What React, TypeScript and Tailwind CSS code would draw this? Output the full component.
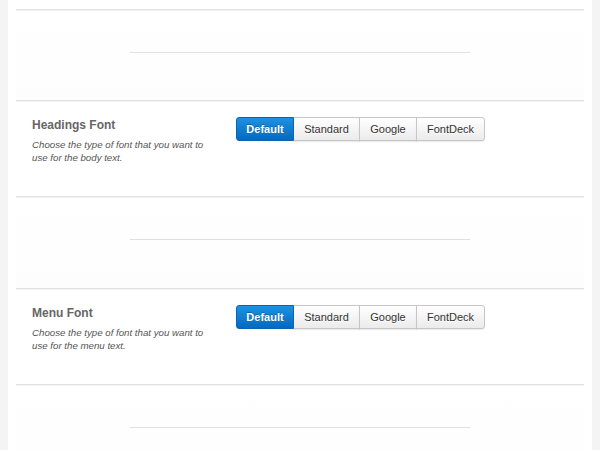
import React, { useState } from 'react';

const options = ['Default', 'Standard', 'Google', 'FontDeck'];
const widths: Record<string, string> = {
  Default: 'w-[58px]',
  Standard: 'w-[67px]',
  Google: 'w-[58px]',
  FontDeck: 'w-[69px]',
};

const Divider: React.FC = () => (
  <div className="h-[2px] border-t border-[#e2e2e2] bg-[#f2f2f2]" />
);

const Spacer: React.FC<{ first?: boolean }> = ({ first }) => (
  <div
    className={`${first ? 'h-[89px]' : 'h-[90px]'} flex flex-col bg-gradient-to-b from-white to-[#fdfdfd]`}
  >
    <div className="h-[41px]" />
    <div className="mx-auto w-[340px] h-[2px] border-t border-[#e0e0e0] bg-white" />
  </div>
);

const FontPicker: React.FC = () => {
  const [selected, setSelected] = useState('Default');
  return (
    <div className="flex">
      {options.map((opt, i) => {
        const active = selected === opt;
        return (
          <button
            key={opt}
            onClick={() => setSelected(opt)}
            className={`${widths[opt]} h-[24px] text-[11px] leading-none border ${
              i === 0 ? 'rounded-l-[3px]' : '-ml-px'
            } ${i === options.length - 1 ? 'rounded-r-[3px]' : ''} ${
              active
                ? 'relative z-10 font-bold text-white border-[#0a63b4] bg-gradient-to-b from-[#1d92e0] to-[#0569c0] [text-shadow:0_-1px_0_rgba(0,0,0,0.25)]'
                : 'text-[#333] border-[#c6c6c6] bg-gradient-to-b from-white to-[#ebebeb] shadow-[0_1px_1px_rgba(0,0,0,0.08)] [text-shadow:0_1px_0_#fff]'
            }`}
          >
            {opt}
          </button>
        );
      })}
    </div>
  );
};

const Section: React.FC<{ title: string; desc: string }> = ({ title, desc }) => (
  <div className="h-[94px] flex">
    <div className="w-[220px] pl-4 pt-[16px]">
      <h3 className="text-[12px] leading-[14px] font-bold text-[#666]">{title}</h3>
      <p className="mt-[6px] max-w-[176px] text-[9.7px] leading-[13px] italic text-[#555]">{desc}</p>
    </div>
    <div className="pt-[15px]">
      <FontPicker />
    </div>
  </div>
);

const App: React.FC = () => {
  return (
    <div
      className="h-[450px] overflow-hidden bg-[#f4f4f4] px-2"
      style={{ fontFamily: '"Liberation Sans", Arial, sans-serif' }}
    >
      <div className="h-full bg-white px-2 pt-[9px]">
        <Divider />
        <Spacer first />
        <Divider />
        <Section title="Headings Font" desc="Choose the type of font that you want to use for the body text." />
        <Divider />
        <Spacer />
        <Divider />
        <Section title="Menu Font" desc="Choose the type of font that you want to use for the menu text." />
        <Divider />
        <Spacer />
      </div>
    </div>
  );
};

export default App;
